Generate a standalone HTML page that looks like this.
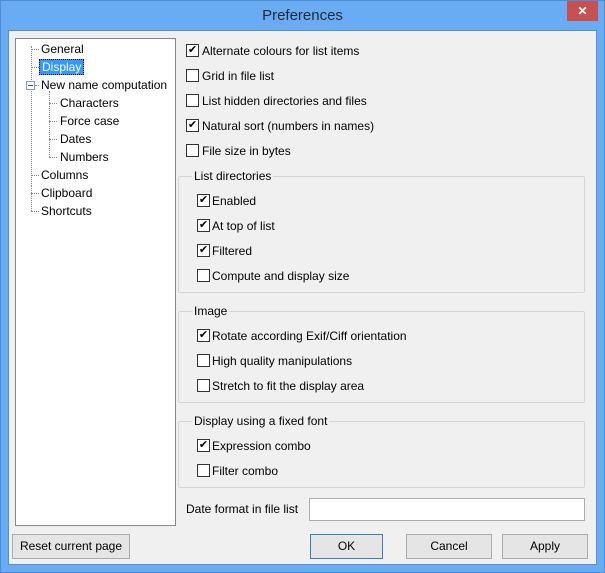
<!DOCTYPE html>
<html><head><style>
*{box-sizing:border-box;margin:0;padding:0}
body{width:605px;height:573px;background:#6aacf3;font-family:"Liberation Sans",sans-serif;font-size:12px;color:#000;position:relative;overflow:hidden}
.frame{position:absolute;left:0;top:0;width:605px;height:573px;border:1px solid #4e8ed6}
.title{position:absolute;left:0;top:7px;width:605px;text-align:center;font-size:15px;color:#1e2a3a}
.close{position:absolute;left:567px;top:1px;width:31px;height:20px;background:#c75050;color:#fff;text-align:center;font-size:12px;font-weight:bold;line-height:20px}
.client{position:absolute;left:8px;top:30px;width:589px;height:535px;background:#f0f0f0;border:1px solid #5a8fcf}
.a{position:absolute}
.tree{left:15px;top:38px;width:161px;height:488px;background:#fff;border:1px solid #828790}
.t{position:absolute;white-space:nowrap;line-height:14px}
.dl{position:absolute;border-left:1px dotted #888}
.dh{position:absolute;border-top:1px dotted #888;width:8px}
.cb{position:absolute;width:13px;height:13px;border:1px solid #333;background:#fff;font-size:11px;line-height:11px;text-align:center}
.lbl{position:absolute;white-space:nowrap;line-height:14px}
.grp{position:absolute;border:1px solid #d5d5d5;border-radius:2px}
.gt{position:absolute;background:#f0f0f0;padding:0 2px;line-height:14px}
.btn{position:absolute;height:25px;border:1px solid #acacac;background:#e5e5e5;text-align:center;line-height:23px}
</style></head><body>
<div class="frame"></div>
<div class="title">Preferences</div>
<div class="close">✕</div>
<div class="client"></div>
<div class="a tree"></div>
<div class="dl" style="left:31px;top:46px;height:140px"></div>
<div class="dh" style="left:31px;top:49px"></div>
<div class="dh" style="left:31px;top:67px"></div>
<div class="dh" style="left:35px;top:85px;width:4px"></div>
<div class="dh" style="left:31px;top:175px"></div>
<div class="dh" style="left:31px;top:193px"></div>
<div class="dh" style="left:31px;top:211px"></div>
<div class="dl" style="left:31px;top:186px;height:25px"></div>
<div class="a" style="left:26px;top:81px;width:9px;height:9px;border:1px solid #8a9ab0;background:#fff"></div>
<div class="a" style="left:28px;top:85px;width:5px;height:1px;background:#3a5a90"></div>
<div class="dl" style="left:49px;top:91px;height:66px"></div>
<div class="dh" style="left:49px;top:103px"></div>
<div class="dh" style="left:49px;top:121px"></div>
<div class="dh" style="left:49px;top:139px"></div>
<div class="dh" style="left:49px;top:157px"></div>
<div class="t" style="left:41px;top:42px">General</div>
<div class="t" style="left:39px;top:59px;background:#3399ff;color:#fff;padding:0 2px;border:1px dotted #000">Display</div>
<div class="t" style="left:41px;top:78px">New name computation</div>
<div class="t" style="left:60px;top:96px">Characters</div>
<div class="t" style="left:60px;top:114px">Force case</div>
<div class="t" style="left:60px;top:132px">Dates</div>
<div class="t" style="left:60px;top:150px">Numbers</div>
<div class="t" style="left:41px;top:168px">Columns</div>
<div class="t" style="left:41px;top:186px">Clipboard</div>
<div class="t" style="left:41px;top:204px">Shortcuts</div>

<div class="cb" style="left:186px;top:44px">✔</div><div class="lbl" style="left:202px;top:44px">Alternate colours for list items</div>
<div class="cb" style="left:186px;top:69px"></div><div class="lbl" style="left:202px;top:69px">Grid in file list</div>
<div class="cb" style="left:186px;top:94px"></div><div class="lbl" style="left:202px;top:94px">List hidden directories and files</div>
<div class="cb" style="left:186px;top:119px">✔</div><div class="lbl" style="left:202px;top:119px">Natural sort (numbers in names)</div>
<div class="cb" style="left:186px;top:144px"></div><div class="lbl" style="left:202px;top:144px">File size in bytes</div>

<div class="grp" style="left:178px;top:176px;width:407px;height:117px"></div>
<div class="gt" style="left:192px;top:169px">List directories</div>
<div class="cb" style="left:197px;top:194px">✔</div><div class="lbl" style="left:212px;top:194px">Enabled</div>
<div class="cb" style="left:197px;top:219px">✔</div><div class="lbl" style="left:212px;top:219px">At top of list</div>
<div class="cb" style="left:197px;top:244px">✔</div><div class="lbl" style="left:212px;top:244px">Filtered</div>
<div class="cb" style="left:197px;top:269px"></div><div class="lbl" style="left:212px;top:269px">Compute and display size</div>

<div class="grp" style="left:178px;top:311px;width:407px;height:92px"></div>
<div class="gt" style="left:192px;top:304px">Image</div>
<div class="cb" style="left:197px;top:329px">✔</div><div class="lbl" style="left:212px;top:329px">Rotate according Exif/Ciff orientation</div>
<div class="cb" style="left:197px;top:354px"></div><div class="lbl" style="left:212px;top:354px">High quality manipulations</div>
<div class="cb" style="left:197px;top:379px"></div><div class="lbl" style="left:212px;top:379px">Stretch to fit the display area</div>

<div class="grp" style="left:178px;top:421px;width:407px;height:67px"></div>
<div class="gt" style="left:192px;top:414px">Display using a fixed font</div>
<div class="cb" style="left:197px;top:439px">✔</div><div class="lbl" style="left:212px;top:439px">Expression combo</div>
<div class="cb" style="left:197px;top:464px"></div><div class="lbl" style="left:212px;top:464px">Filter combo</div>

<div class="lbl" style="left:186px;top:502px">Date format in file list</div>
<div class="a" style="left:309px;top:498px;width:276px;height:23px;background:#fff;border:1px solid #abadb3"></div>

<div class="btn" style="left:12px;top:534px;width:118px">Reset current page</div>
<div class="btn" style="left:310px;top:534px;width:73px;border-color:#3c7fb1;background:#e5e5e5">OK</div>
<div class="btn" style="left:406px;top:534px;width:86px">Cancel</div>
<div class="btn" style="left:502px;top:534px;width:86px">Apply</div>
</body></html>
